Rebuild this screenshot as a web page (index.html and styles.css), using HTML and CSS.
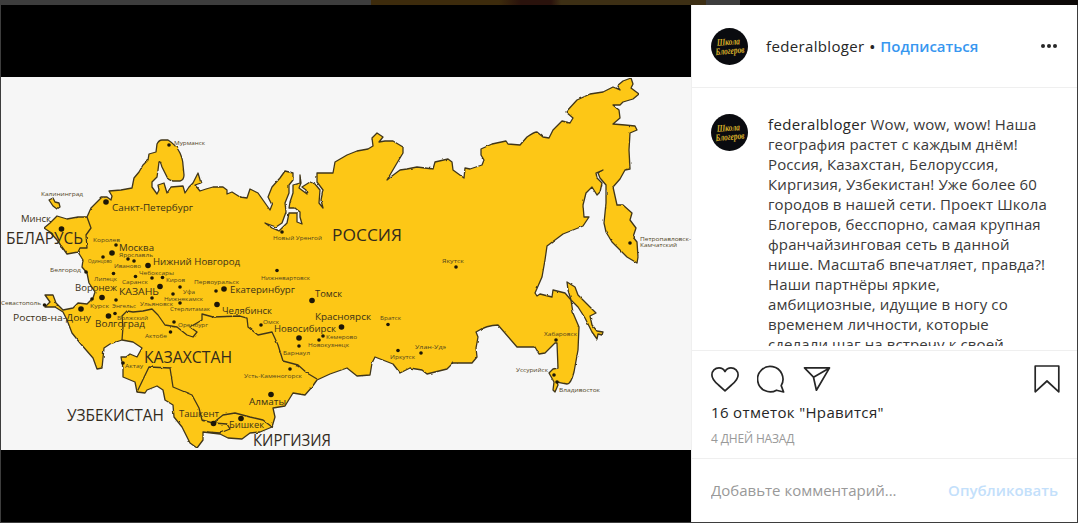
FILE: index.html
```html
<!DOCTYPE html>
<html lang="ru">
<head>
  <meta charset="UTF-8">
  <meta name="viewport" content="width=device-width, initial-scale=1">
  <title>federalbloger</title>
  <link rel="stylesheet" href="styles.css">
</head>
<body>
  <div class="feed-strip"><span class="tile yellow"></span><span class="tile dark"></span></div>

  <article class="post">
    <div class="media">
      <svg class="map" viewBox="1 77 690 373" width="690" height="373">
        <defs>
          <filter id="rough" x="0" y="0" width="100%" height="100%" color-interpolation-filters="sRGB">
            <feTurbulence type="fractalNoise" baseFrequency="0.2" numOctaves="1" seed="4" result="n"/>
            <feDisplacementMap in="SourceGraphic" in2="n" scale="2.4" xChannelSelector="R" yChannelSelector="G"/>
            <feGaussianBlur stdDeviation="0.35"/>
          </filter>
        </defs>
        <g class="land" filter="url(#rough)">
          <path d="M87 217 L91 208 97 202 102 197 107 197 111 200 112 196 109 191 121 190 132 188 134 178 139 172 143 165 148 160 149 154 156 152 157 144 Q159 140 162 140 L168 140 Q176 145 180 153 Q183 160 183 165 L184 175 Q184 180 180 181 L173 181 Q168 180 167 177 L162 167 Q160 160 159 162 L158 170 157 177 152 182 152 187 157 194 159 190 158 185 164 183 167 193 171 187 183 186 185 193 189 187 193 183 198 173 201 183 195 185 200 191 206 189 213 187 223 187 227 190 227 194 232 192 240 197 247 198 250 189 258 193 270 210 272 205 268 197 272 187 280 178 285 171 293 173 293 180 289 185 289 193 285 203 286 212 282 223 276 227 265 223 272 228 279 231 287 223 289 213 297 213 297 222 302 224 300 217 300 212 295 208 289 208 290 202 293 193 293 185 300 183 300 175 301 183 299 188 307 194 306 190 302 187 310 182 315 184 320 190 319 203 323 208 321 200 323 190 317 182 317 173 333 173 335 162 347 155 357 151 368 149 373 146 372 138 377 133 383 137 379 142 385 141 393 141 403 147 403 153 397 163 387 180 392 176 400 170 407 169 417 167 433 169 435 162 448 159 452 162 453 170 464 178 465 168 470 169 482 165 484 160 481 155 481 149 492 144 506 141 508 144 520 145 527 137 Q534 132 537 132 L543 137 549 138 553 130 562 121 570 123 573 118 566 112 577 100 590 94 603 92 613 87 620 90 617 86 623 81 631 78 633 84 631 88 639 94 633 99 623 102 620 105 613 105 619 110 620 118 613 124 625 125 635 126 637 130 630 133 629 150 630 169 625 170 620 179 613 187 617 205 623 205 632 213 630 220 636 228 633 237 637 242 638 257 637 263 627 257 612 242 606 232 604 223 606 203 606 185 600 178 598 173 603 170 596 173 597 178 602 183 600 192 597 195 592 187 586 193 583 205 584 217 589 217 583 226 563 234 547 246 545 260 542 277 535 293 537 296 540 294 552 297 553 290 565 293 571 300 573 313 579 327 578 350 574 372 Q571 384 567 384 L557 382 558 385 555 392 553 390 554 382 549 373 553 369 558 368 557 343 555 343 545 353 539 354 535 347 517 347 498 325 Q487 325 476 332 L478 337 476 348 477 357 472 363 453 363 447 369 427 374 422 370 410 368 400 373 393 364 375 357 372 363 370 375 357 376 347 368 330 374 317 380 312 387 305 395 293 393 285 406 273 408 275 417 272 427 260 432 250 433 242 439 228 438 220 434 203 432 203 440 197 448 190 443 182 427 174 417 173 405 165 400 163 390 157 386 147 390 145 393 137 392 135 382 123 377 123 368 121 357 126 357 130 354 137 357 142 348 133 342 122 340 110 344 104 348 102 368 97 369 93 358 80 343 72 333 67 320 63 312 55 307 45 307 50 302 45 295 53 295 56 303 63 310 73 308 78 303 87 304 93 298 95 292 89 283 87 273 82 267 83 260 78 252 67 254 62 247 57 240 50 232 44 228 50 223 57 216 67 219 78 217 Z"/>
          <path d="M567 282 L575 287 578 295 587 304 596 313 590 316 592 325 597 331 603 332 602 335 598 334 597 339 592 332 585 318 578 307 571 300 568 290 Z"/>
          <path d="M49 200 L53 198 55 202 59 203 60 207 57 209 53 206 Z"/>
          <path class="border" d="M87 217 L91 228 86 235 87 248 80 248 78 252"/>
          <path class="border" d="M122 340 L123 327 122 316 127 311 133 312 143 311 152 309 158 315 165 325 177 327 187 335 193 337 197 332 190 327 202 320 202 314 213 317 240 316 247 318 248 327 258 335 272 332 278 345 283 361 298 365 307 373 317 379"/>
          <path class="border" d="M137 392 L149 367 170 368 173 387 192 395 199 408 202 420 213 423 223 415 235 413 250 417 263 420 272 427"/>
          <path class="border" d="M213 423 L227 424 230 429 220 433 207 432"/>
        </g>

        <g id="bigDots"></g>
        <g id="smallDots"></g>
        <g id="labels"></g>
      </svg>
    </div>

    <div class="panel">
      <header class="post-header">
        <svg class="avatar" viewBox="0 0 37 37">
          <circle cx="18.500" cy="18.500" r="18.500"/>
          <text x="6" y="17" textLength="23" lengthAdjust="spacingAndGlyphs" transform="rotate(-3 18 18)">Школа</text>
          <text x="4" y="26" textLength="29" lengthAdjust="spacingAndGlyphs" transform="rotate(-5 18 18)">Блогеров</text>
        </svg>
        <div class="author">
          <a class="username">federalbloger</a>
          <span class="sep">•</span>
          <button class="follow">Подписаться</button>
        </div>
        <button class="more"><i></i><i></i><i></i></button>
      </header>

      <div class="comments">
        <svg class="avatar" viewBox="0 0 37 37">
          <circle cx="18.500" cy="18.500" r="18.500"/>
          <text x="6" y="17" textLength="23" lengthAdjust="spacingAndGlyphs" transform="rotate(-3 18 18)">Школа</text>
          <text x="4" y="26" textLength="29" lengthAdjust="spacingAndGlyphs" transform="rotate(-5 18 18)">Блогеров</text>
        </svg>
        <p class="caption"><a class="username">federalbloger</a> Wow, wow, wow! Наша<br>
          география растет с каждым днём!<br>
          Россия, Казахстан, Белоруссия,<br>
          Киргизия, Узбекистан! Уже более 60<br>
          городов в нашей сети. Проект Школа<br>
          Блогеров, бесспорно, самая крупная<br>
          франчайзинговая сеть в данной<br>
          нише. Масштаб впечатляет, правда?!<br>
          Наши партнёры яркие,<br>
          амбициозные, идущие в ногу со<br>
          временем личности, которые<br>
          сделали шаг на встречу к своей</p>
      </div>

      <div class="actions">
        <div class="icons">
          <svg width="28" height="28" viewBox="0 0 28 28"><path d="M14 6.500 C12.500 3.800 10.300 2.800 8 2.800 C4 2.800 0.900 6 0.900 10 C0.900 14.500 4 17 7.500 20 L14 25.800 L20.500 20 C24 17 27.100 14.500 27.100 10 C27.100 6 24 2.800 20 2.800 C17.700 2.800 15.500 3.800 14 6.500 Z"/></svg>
          <svg width="28" height="28" viewBox="0 0 28 28"><path d="M24.200 20.600 A12.700 12.700 0 1 0 19.500 25.200 L26.600 27 Z"/></svg>
          <svg width="28" height="28" viewBox="0 0 28 28"><path d="M1.500 2.900 H26.500 L13.400 25.200 L10.500 12.200 Z M10.500 12.200 L26.500 2.900"/></svg>
          <svg class="save" width="26" height="28" viewBox="0 0 26 28"><path d="M1.200 1 H24.800 V26.800 L13 16 L1.200 26.800 Z"/></svg>
        </div>
        <div class="likes">16 отметок "Нравится"</div>
        <time class="date">4 ДНЕЙ НАЗАД</time>
      </div>

      <form class="comment-form">
        <input type="text" placeholder="Добавьте комментарий...">
        <button type="button">Опубликовать</button>
      </form>
    </div>
  </article>

  <script src="map.js"></script>
</body>
</html>
```

FILE: styles.css
```css
* {
  box-sizing: border-box;
}

body {
  margin: 0;
  height: 523px;
  overflow: hidden;
  background: #3d3d3d;
  font-family: "Open Sans", "Noto Sans", sans-serif;
  font-size: 15px;
  color: #262626;
}

button {
  padding: 0;
  border: none;
  background: none;
  font: inherit;
  cursor: pointer;
}

.feed-strip {
  display: grid;
  grid-template-columns: 335px 338px;
  column-gap: 34px;
  padding-left: 371px;
  height: 5px;
}

.tile.yellow {
  background: linear-gradient(90deg, #3d2b0c 0 128px, #2a120c 150px, #2a120c 180px, #3d2f14 190px);
}

.tile.dark {
  background: #0d0908;
}

.post {
  display: grid;
  grid-template-columns: 690px 386px;
  height: 517px;
  margin: 0 1px;
}

.media {
  display: flex;
  align-items: center;
  background: #000;
}

.map {
  display: block;
  background: #f6f6f6;
}

.land path {
  fill: #fdc716;
  stroke: #40361a;
  stroke-width: 1.3;
  stroke-linejoin: round;
}

.land .border {
  fill: none;
}

.map circle {
  fill: #1d1708;
}

.map text {
  fill: #3b3117;
  font-family: "Open Sans", sans-serif;
}

.map .small {
  font-size: 6px;
  fill: #51451f;
}

.map .city {
  font-size: 9.8px;
}

.map .country {
  font-size: 15.5px;
  fill: #332b1c;
}

.panel {
  display: flex;
  flex-direction: column;
  background: #fff;
  border-left: 1px solid #efefef;
}

.post-header {
  display: flex;
  align-items: center;
  height: 83px;
  padding: 0 20px 0 19px;
  border-bottom: 1px solid #efefef;
}

.avatar {
  flex: none;
  width: 37px;
  height: 37px;
}

.avatar circle {
  fill: #0a0b0f;
}

.avatar text {
  fill: #d9b02a;
  font: italic bold 10px "Liberation Serif", serif;
}

.author {
  display: flex;
  gap: 5px;
  flex: 1;
  margin-left: 18px;
}

.username,
.likes {
  font-weight: 500;
  letter-spacing: 0.35px;
}

.sep {
  font-weight: 600;
}

.follow {
  color: #3897f0;
  font-weight: 600;
}

.more {
  display: flex;
  gap: 2px;
}

.more i {
  width: 4px;
  height: 4px;
  border-radius: 50%;
  background: #262626;
}

.comments {
  display: flex;
  gap: 20px;
  height: 258px;
  padding: 26px 0 0 19px;
  margin-bottom: 4px;
  overflow: hidden;
}

.caption {
  margin: 0;
  line-height: 20px;
  white-space: nowrap;
  letter-spacing: 0.12px;
  color: #3a3a3a;
}

.caption .username {
  color: #262626;
}

.actions {
  height: 108px;
  padding: 14px 17px 0 19px;
  border-top: 1px solid #efefef;
}

.icons {
  display: flex;
  gap: 18px;
}

.icons svg {
  fill: none;
  stroke: #262626;
  stroke-width: 1.7;
  stroke-linejoin: round;
}

.icons .save {
  margin-left: auto;
}

.likes {
  margin-top: 9px;
  line-height: 20px;
}

.date {
  display: block;
  margin-top: 8px;
  font-size: 12px;
  line-height: 18px;
  letter-spacing: -0.15px;
  color: #999;
}

.comment-form {
  display: flex;
  align-items: center;
  flex: 1;
  padding: 0 19px 1px;
  border-top: 1px solid #efefef;
}

.comment-form input {
  flex: 1;
  min-width: 0;
  padding: 0;
  border: none;
  outline: none;
  font: inherit;
}

.comment-form input::placeholder {
  color: #999;
}

.comment-form button {
  color: #c3e0fb;
  font-weight: 600;
}
```

FILE: map.js
```js
const bigDots = [
  [106, 202], [61.5, 229], [112, 253], [148, 265.5], [160, 286.5], [102, 297.5],
  [81, 309], [108.5, 316], [224, 289], [217, 304.5], [312, 300.5], [341.5, 327],
  [299, 338], [271, 394.5], [241, 418.5], [213.5, 423.5]
];

const smallDots = [
  [169, 145], [116, 245], [103, 257], [128, 259], [134, 261], [86, 272], [113.5, 273.5],
  [135.5, 276.5], [152, 278], [162.5, 277.5], [180, 287], [173, 294], [152, 298], [92, 299],
  [116, 300], [180, 303], [216, 291], [115, 313.5], [174, 322], [170.5, 332], [123, 363],
  [261, 325], [277, 270.5], [282, 232], [323, 336], [319, 340], [299, 346], [290, 369],
  [388, 324.5], [398, 350.5], [421, 353], [456, 267], [556, 340], [554, 375], [557, 382],
  [630, 243], [44.5, 305]
];

// name, left, right, baseline, class
const labels = [
  ['БЕЛАРУСЬ', 6, 83, 243.5, 'country'],
  ['РОССИЯ', 332, 402, 241, 'country'],
  ['КАЗАХСТАН', 144, 232, 363, 'country'],
  ['УЗБЕКИСТАН', 67, 164, 420.5, 'country'],
  ['КИРГИЗИЯ', 253, 331, 446, 'country'],
  ['Санкт-Петербург', 112, 193, 210.5, 'city'],
  ['Минск', 21, 51, 221.5, 'city'],
  ['Москва', 119, 154, 251, 'city'],
  ['Нижний Новгород', 153, 240, 265, 'city'],
  ['Воронеж', 75, 117, 291, 'city'],
  ['КАЗАНЬ', 119, 159, 295, 'city'],
  ['Ростов-на-Дону', 13, 91, 321, 'city'],
  ['Волгоград', 95, 145, 327, 'city'],
  ['Ташкент', 179, 219, 417, 'city'],
  ['Бишкек', 229, 264, 428, 'city'],
  ['Алматы', 249, 286, 405, 'city'],
  ['Новосибирск', 274, 336, 332, 'city'],
  ['Красноярск', 315, 371, 320, 'city'],
  ['Челябинск', 222, 272, 314, 'city'],
  ['Екатеринбург', 230, 295, 292.5, 'city'],
  ['Томск', 315, 342, 297, 'city'],
  ['Мурманск', 174, 205, 144.5, 'small'],
  ['Калининград', 41, 83, 195.5, 'small'],
  ['Королев', 93, 120, 241.5, 'small'],
  ['Ярославль', 119, 153, 256.5, 'small'],
  ['Одинцово', 88, 112, 263, 'small'],
  ['Иваново', 114, 141, 268, 'small'],
  ['Белгород', 50, 81, 271.5, 'small'],
  ['Липецк', 94, 117, 281, 'small'],
  ['Чебоксары', 139, 174, 275, 'small'],
  ['Саранск', 122, 148, 284, 'small'],
  ['Киров', 166, 185, 281.5, 'small'],
  ['Первоуральск', 194, 239, 284, 'small'],
  ['Уфа', 183, 195, 294, 'small'],
  ['Нижнекамск', 164, 203, 300.5, 'small'],
  ['Курск', 90, 109, 308, 'small'],
  ['Энгельс', 112, 136, 308, 'small'],
  ['Ульяновск', 140, 173, 305.5, 'small'],
  ['Стерлитамак', 170, 210, 311, 'small'],
  ['Севастополь', 1, 41, 305, 'small'],
  ['Волжский', 117, 148, 320, 'small'],
  ['Оренбург', 178, 208, 327, 'small'],
  ['Актобе', 145, 167, 337.5, 'small'],
  ['Актау', 125, 143, 368, 'small'],
  ['Усть-Каменогорск', 244, 302, 378, 'small'],
  ['Барнаул', 283, 310, 355, 'small'],
  ['Кемерово', 326, 357, 338.5, 'small'],
  ['Новокузнецк', 308, 349, 346.5, 'small'],
  ['Братск', 380, 401, 319.5, 'small'],
  ['Иркутск', 390, 415, 359, 'small'],
  ['Улан-Удэ', 415, 446, 349, 'small'],
  ['Омск', 263, 279, 323.5, 'small'],
  ['Нижневартовск', 261, 310, 280, 'small'],
  ['Новый Уренгой', 273, 322, 240, 'small'],
  ['Якутск', 442, 464, 263, 'small'],
  ['Хабаровск', 544, 577, 336, 'small'],
  ['Уссурийск', 516, 548, 372, 'small'],
  ['Владивосток', 559, 600, 392, 'small'],
  ['Петропавловск-', 640, 691, 240.5, 'small'],
  ['Камчатский', 640, 677, 246.5, 'small']
];

const circles = (list, r) =>
  list.map(([x, y]) => `<circle cx="${x}" cy="${y}" r="${r}"/>`).join('');

document.getElementById('bigDots').innerHTML = circles(bigDots, 2.8);
document.getElementById('smallDots').innerHTML = circles(smallDots, 1.8);

document.getElementById('labels').innerHTML = labels.map(([name, x1, x2, y, type]) =>
  `<text class="${type}" x="${x1}" y="${y}" textLength="${x2 - x1}" lengthAdjust="spacingAndGlyphs">${name}</text>`
).join('');
```
